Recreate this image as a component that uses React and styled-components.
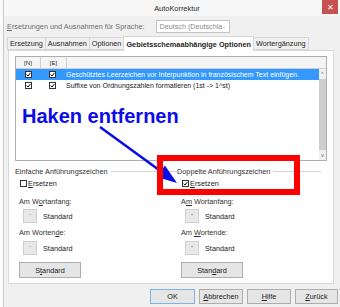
import React from "react";
import styled, { createGlobalStyle } from "styled-components";

const GlobalStyle = createGlobalStyle`
    html, body {
        margin: 0;
        padding: 0;
        background: #ffffff;
    }
    body {
        font-family: "Liberation Sans", Arial, sans-serif;
        font-size: 7.3px;
        color: #1e1e1e;
    }
`;

const Screen = styled.div`
    position: relative;
    width: 340px;
    height: 307px;
    overflow: hidden;
    display: flex;
    background: #fafafa;
`;

const Dialog = styled.div`
    margin-left: 3px;
    flex: 1;
    display: flex;
    flex-direction: column;
    background: #f0f0f0;
    border-left: 1px solid #c9c9c9;
`;

const TitleBar = styled.div`
    height: 16px;
    position: relative;
    display: flex;
    align-items: center;
    justify-content: center;
    background: #f7f7f7;
    font-size: 7.4px;
    color: #2a2a2a;
    padding-left: 10px;
`;

const CloseButton = styled.div`
    position: absolute;
    right: 2px;
    top: 0;
    width: 16px;
    height: 14px;
    background: #c75050;
    color: #ffffff;
    display: flex;
    align-items: center;
    justify-content: center;
    font-size: 8px;
`;

const LangRow = styled.div`
    height: 20px;
    display: flex;
    align-items: center;
    padding-left: 3px;
    gap: 11px;
    color: #6e6e6e;
`;

const Select = styled.div`
    width: 74px;
    height: 13px;
    border: 1px solid #c3c3c3;
    background: #ffffff;
    color: #8a8a8a;
    display: flex;
    align-items: center;
    justify-content: space-between;
    padding: 0 3px 0 3px;
    box-sizing: border-box;
    font-size: 7.2px;
    overflow: hidden;
    white-space: nowrap;
`;

const TabBar = styled.div`
    display: flex;
    align-items: flex-end;
    padding-left: 4px;
    height: 14px;
`;

const Tab = styled.div`
    height: ${(p) => (p.active ? 15 : 13)}px;
    box-sizing: border-box;
    padding: 0 2px;
    display: flex;
    align-items: center;
    border: 1px solid #d6d6d6;
    border-bottom: ${(p) => (p.active ? "none" : "1px solid #d6d6d6")};
    margin-left: -1px;
    background: ${(p) => (p.active ? "#ffffff" : "#f0f0f0")};
    font-weight: ${(p) => (p.active ? "bold" : "normal")};
    position: relative;
    z-index: ${(p) => (p.active ? 2 : 1)};
    margin-bottom: ${(p) => (p.active ? "-1px" : "0")};
`;

const Panel = styled.div`
    margin-left: 4px;
    width: 326px;
    height: 234px;
    box-sizing: border-box;
    background: #ffffff;
    border: 1px solid #d9d9d9;
    padding: 5px 6px 0 6px;
    display: flex;
    flex-direction: column;
`;

const List = styled.div`
    width: 312px;
    height: 105px;
    box-sizing: border-box;
    border: 1px solid #adadad;
    display: flex;
    flex-direction: column;
`;

const HeaderRow = styled.div`
    display: flex;
    height: 11px;
    background: #f4f4f4;
    border-bottom: 1px solid #d0d0d0;
`;

const HeaderCell = styled.div`
    width: ${(p) => (p.w ? p.w + "px" : "auto")};
    flex: ${(p) => (p.w ? "none" : 1)};
    display: flex;
    align-items: center;
    justify-content: center;
    border-right: ${(p) => (p.w ? "1px solid #d0d0d0" : "none")};
    font-size: 6.2px;
    color: #333;
`;

const ListBody = styled.div`
    flex: 1;
    display: flex;
`;

const Rows = styled.div`
    flex: 1;
    display: flex;
    flex-direction: column;
`;

const Row = styled.div`
    display: flex;
    height: 11px;
    align-items: center;
    background: ${(p) => (p.selected ? "#3399ff" : "transparent")};
    color: ${(p) => (p.selected ? "#ffffff" : "#222")};
    font-size: 7px;
    white-space: nowrap;
`;

const CheckCell = styled.div`
    width: 24px;
    display: flex;
    justify-content: center;
`;

const RowText = styled.div`
    padding-left: 2px;
`;

const Scrollbar = styled.div`
    width: 7px;
    display: flex;
    flex-direction: column;
    background: #f0f0f0;
`;

const ScrollArrow = styled.div`
    height: 10px;
    display: flex;
    align-items: center;
    justify-content: center;
    font-size: 5px;
    color: #555;
`;

const ScrollThumb = styled.div`
    flex: 1;
    background: #cdcdcd;
`;

const Groups = styled.div`
    display: flex;
    margin-top: 5px;
`;

const Group = styled.div`
    width: ${(p) => p.w}px;
    display: flex;
    flex-direction: column;
`;

const Legend = styled.div`
    display: flex;
    align-items: center;
    height: 10px;
    gap: 3px;
    color: #333;
    white-space: nowrap;
    &::after {
        content: "";
        flex: 1;
        border-top: 1px solid #d5d5d5;
        margin-right: ${(p) => p.gapRight || 0}px;
    }
`;

const CheckLine = styled.label`
    display: flex;
    align-items: center;
    height: 9px;
    margin-top: 3px;
    margin-left: 5px;
    gap: 1px;
    color: #222;
`;

const Box = styled.span`
    width: 7px;
    height: 7px;
    box-sizing: border-box;
    border: 1px solid #333333;
    background: #ffffff;
    display: inline-flex;
    align-items: center;
    justify-content: center;
`;

const Label = styled.div`
    margin-left: 4px;
    margin-top: ${(p) => p.mt}px;
    height: 10px;
    display: flex;
    align-items: center;
    color: #333;
`;

const QuoteRow = styled.div`
    display: flex;
    align-items: center;
    gap: 6px;
    margin-left: 8px;
    margin-top: ${(p) => p.mt}px;
    color: #222;
`;

const SmallButton = styled.div`
    width: 14px;
    height: 14px;
    box-sizing: border-box;
    border: 1px solid #cfcfcf;
    background: #e8e8e8;
    display: flex;
    align-items: center;
    justify-content: center;
    font-size: 6px;
    color: #555;
`;

const Button = styled.div`
    width: ${(p) => p.w}px;
    height: ${(p) => p.h || 16}px;
    box-sizing: border-box;
    border: 1px solid ${(p) => (p.primary ? "#7eb4ea" : "#adadad")};
    background: #e5e5e5;
    display: flex;
    align-items: center;
    justify-content: center;
    color: #222;
    margin-left: ${(p) => p.ml || 0}px;
    margin-top: ${(p) => p.mt || 0}px;
`;

const Footer = styled.div`
    flex: 1;
    display: flex;
    justify-content: flex-end;
    align-items: flex-start;
    padding-top: 5px;
    padding-right: 2px;
    gap: 4px;
`;

const Note = styled.div`
    position: absolute;
    left: 22px;
    top: 106px;
    font-size: 20px;
    line-height: 20px;
    font-weight: bold;
    color: #0c0ce6;
    white-space: nowrap;
`;

const Overlay = styled.svg`
    position: absolute;
    left: 0;
    top: 0;
    pointer-events: none;
`;

const Check = () => (
    <Box>
        <svg width="5" height="5" viewBox="0 0 5 5">
            <path d="M0.6 2.6 L2 4 L4.5 0.8" stroke="#111" strokeWidth="1" fill="none" />
        </svg>
    </Box>
);

const Empty = () => <Box />;

const QuoteGroup = ({ title, checked, single, w }) => (
    <Group w={w}>
        <Legend gapRight={w > 155 ? 0 : 6}>{title}</Legend>
        <CheckLine>
            {checked ? <Check /> : <Empty />}
            <span>
                <u>E</u>rsetzen
            </span>
        </CheckLine>
        <Label mt={8}>
            {single ? (
                <span>
                    Am W<u>o</u>rtanfang:
                </span>
            ) : (
                <span>
                    A<u>m</u> Wortanfang:
                </span>
            )}
        </Label>
        <QuoteRow mt={3}>
            <SmallButton>{single ? "'" : "\""}</SmallButton>
            <span>Standard</span>
        </QuoteRow>
        <Label mt={4}>
            {single ? (
                <span>
                    Am Worten<u>d</u>e:
                </span>
            ) : (
                <span>
                    Am <u>W</u>ortende:
                </span>
            )}
        </Label>
        <QuoteRow mt={4}>
            <SmallButton>{single ? "'" : "\""}</SmallButton>
            <span>Standard</span>
        </QuoteRow>
        <Button w={62} mt={7} ml={4}>
            {single ? (
                <span>
                    S<u>t</u>andard
                </span>
            ) : (
                <span>
                    Stan<u>d</u>ard
                </span>
            )}
        </Button>
    </Group>
);

export default function App() {
    const tip = [177, 183];
    const dir = [0.809, 0.588];
    const len = 20;
    const half = 7;
    const base = [tip[0] - dir[0] * len, tip[1] - dir[1] * len];
    const perp = [-dir[1] * half, dir[0] * half];
    const head = `${tip[0]},${tip[1]} ${base[0] + perp[0]},${base[1] + perp[1]} ${base[0] - perp[0]},${base[1] - perp[1]}`;

    return (
        <>
            <GlobalStyle />
            <Screen>
                <Dialog>
                    <TitleBar>
                        AutoKorrektur
                        <CloseButton>✕</CloseButton>
                    </TitleBar>
                    <LangRow>
                        <span>
                            <u>E</u>rsetzungen und Ausnahmen für Sprache:
                        </span>
                        <Select>
                            <span>Deutsch (Deutschla</span>
                            <span style={{ fontSize: 5 }}>⌄</span>
                        </Select>
                    </LangRow>
                    <TabBar>
                        <Tab>Ersetzung</Tab>
                        <Tab>Ausnahmen</Tab>
                        <Tab>Optionen</Tab>
                        <Tab active>Gebietsschemaabhängige Optionen</Tab>
                        <Tab>Wortergänzung</Tab>
                    </TabBar>
                    <Panel>
                        <List>
                            <HeaderRow>
                                <HeaderCell w={24}>[N]</HeaderCell>
                                <HeaderCell w={25}>[E]</HeaderCell>
                                <HeaderCell />
                            </HeaderRow>
                            <ListBody>
                                <Rows>
                                    <Row selected>
                                        <CheckCell>
                                            <Check />
                                        </CheckCell>
                                        <CheckCell>
                                            <Check />
                                        </CheckCell>
                                        <RowText>
                                            Geschütztes Leerzeichen vor Interpunktion in französischem Text einfügen.
                                        </RowText>
                                    </Row>
                                    <Row>
                                        <CheckCell>
                                            <Check />
                                        </CheckCell>
                                        <CheckCell>
                                            <Check />
                                        </CheckCell>
                                        <RowText>Suffixe von Ordnungszahlen formatieren (1st -&gt; 1^st)</RowText>
                                    </Row>
                                </Rows>
                                <Scrollbar>
                                    <ScrollArrow>^</ScrollArrow>
                                    <ScrollThumb />
                                    <ScrollArrow>v</ScrollArrow>
                                </Scrollbar>
                            </ListBody>
                        </List>
                        <Groups>
                            <QuoteGroup title="Einfache Anführungszeichen" single w={162} />
                            <QuoteGroup title="Doppelte Anführungszeichen" checked w={150} />
                        </Groups>
                    </Panel>
                    <Footer>
                        <Button w={45} h={15} primary>
                            OK
                        </Button>
                        <Button w={44} h={15}>
                            <span>
                                <u>A</u>bbrechen
                            </span>
                        </Button>
                        <Button w={44} h={15}>
                            <span>
                                <u>H</u>ilfe
                            </span>
                        </Button>
                        <Button w={43} h={15}>
                            <span>
                                <u>Z</u>urück
                            </span>
                        </Button>
                    </Footer>
                </Dialog>
                <Note>Haken entfernen</Note>
                <Overlay width="340" height="307">
                    <line x1="100" y1="127" x2={base[0]} y2={base[1]} stroke="#0c0ce6" strokeWidth="2.6" />
                    <polygon points={head} fill="#0c0ce6" />
                    <rect x="160" y="158" width="137" height="34" fill="none" stroke="#ff0000" strokeWidth="6" />
                </Overlay>
            </Screen>
        </>
    );
}
